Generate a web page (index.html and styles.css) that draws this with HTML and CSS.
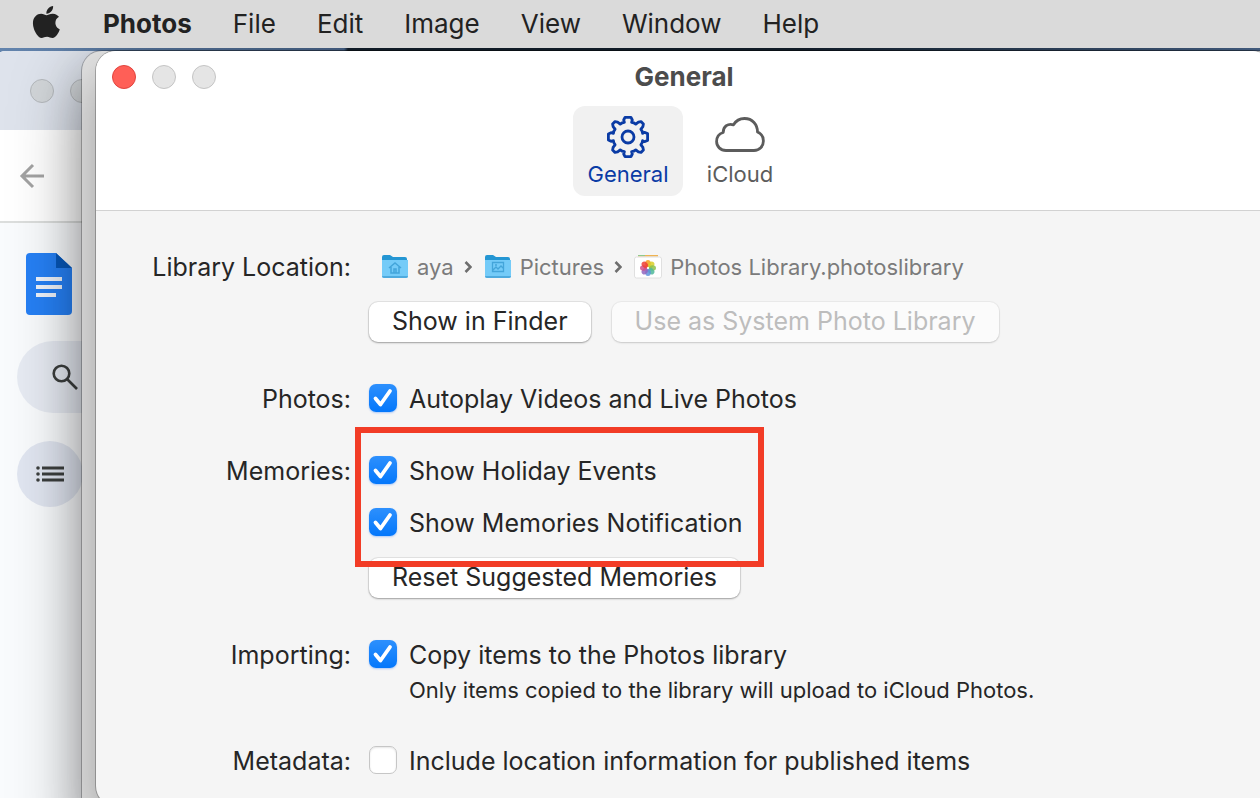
FILE: index.html
```
<!DOCTYPE html>
<html lang="en">
<head>
  <meta charset="UTF-8">
  <meta name="viewport" content="width=device-width, initial-scale=1.0">
  <title>Photos - General</title>
  <link rel="stylesheet" href="styles.css">
</head>
<body>
  <nav class="menubar">
    <a class="apple" href="#" aria-label="Apple menu">
      <svg width="28" height="32" viewBox="4 32 366 448" fill="#222"><path d="M318.700 268.700c-.2-36.700 16.400-64.400 50-84.800-18.800-26.900-47.200-41.700-84.700-44.600-35.500-2.800-74.300 20.700-88.500 20.700-15 0-49.400-19.700-76.400-19.700C63.300 141.200 4 184.800 4 273.500q0 39.300 14.400 81.200c12.800 36.700 59 126.700 107.200 125.200 25.200-.6 43-17.900 75.800-17.900 31.800 0 48.300 17.900 76.400 17.900 48.600-.7 90.400-82.500 102.600-119.300-65.200-30.700-61.700-90-61.700-91.900zm-56.600-164.200c27.300-32.400 24.800-61.900 24-72.500-24.100 1.400-52 16.400-67.900 34.900-17.500 19.800-27.800 44.300-25.600 71.900 26.100 2 49.900-11.400 69.500-34.300z"/></svg>
    </a>
    <a class="app-name" href="#">Photos</a>
    <a href="#">File</a>
    <a href="#">Edit</a>
    <a href="#">Image</a>
    <a href="#">View</a>
    <a href="#">Window</a>
    <a href="#">Help</a>
  </nav>

  <main class="desktop">
    <!-- browser window at the back -->
    <section class="docs-window">
      <div class="docs-tabs">
        <span class="light"></span>
        <span class="light"></span>
      </div>
      <div class="docs-toolbar">
        <button class="icon-btn" aria-label="Back">
          <svg width="26" height="26" viewBox="0 0 26 26" fill="none" stroke="#a3a3a3" stroke-width="3"><path d="M25 13H4M14 2L3 13l11 11"/></svg>
        </button>
      </div>
      <div class="docs-side">
        <svg class="docs-logo" width="46" height="62" viewBox="0 0 46 62">
          <path fill="#2680f5" d="M4 0h26l16 15v43a4 4 0 0 1-4 4H4a4 4 0 0 1-4-4V4a4 4 0 0 1 4-4z"/>
          <path fill="#0757b8" d="M30 0l16 15H30z"/>
          <path fill="#eef3fb" d="M10 24h26v4H10zM10 32h26v4H10zM10 40h20v4H10z"/>
        </svg>
        <button class="docs-search" aria-label="Search">
          <svg width="26" height="26" viewBox="0 0 26 26" fill="none" stroke="#3c3f3e" stroke-width="2.600"><circle cx="9.500" cy="9.500" r="7.800"/><path d="M15 15l10 10"/></svg>
        </button>
        <button class="docs-outline" aria-label="Outline">
          <svg width="28" height="16" viewBox="0 0 28 16" fill="#3c3f3e"><circle cx="2" cy="2" r="1.800"/><circle cx="2" cy="8" r="1.800"/><circle cx="2" cy="14" r="1.800"/><path d="M6 .5h22v3H6zM6 6.500h22v3H6zM6 12.500h22v3H6z"/></svg>
        </button>
      </div>
    </section>

    <!-- photo library window -->
    <section class="library-window"></section>

    <!-- settings -->
    <section class="settings-window">
      <header class="settings-header">
        <div class="titlebar">
          <div class="lights">
            <button class="light close" aria-label="Close"></button>
            <button class="light" aria-label="Minimize" disabled></button>
            <button class="light" aria-label="Zoom" disabled></button>
          </div>
          <h1>General</h1>
        </div>
        <div class="tabs">
          <button class="tab active">
            <svg width="44" height="44" viewBox="-22 -22 44 44" fill="none" stroke="#0a3ba5" stroke-width="2.800" stroke-linejoin="round">
              <path d="M14.600-3.600Q15-4.600 16.500-4.600L19.600-3.500V3.500L16.500 4.600Q15 4.600 14.600 3.600Q14.500 6 12.900 7.800L14.900 10.400L15.400 13L13 15.400L10.400 14.900L7.800 12.900Q6 14.500 3.600 14.600L4.300 17L3 19.600H-3L-4.300 17L-3.600 14.600Q-6 14.500-7.800 12.900L-10.400 14.900L-13 15.400L-15.400 13L-14.900 10.400L-12.900 7.800Q-14.500 6-14.600 3.600L-17 4.300L-19.600 3V-3L-17-4.300L-14.600-3.600Q-14.500-6-12.900-7.800L-14.900-10.400L-15.400-13L-13-15.400L-10.400-14.900L-7.800-12.900Q-6-14.500-3.600-14.600L-4.300-17L-3-19.600H3L4.300-17L3.600-14.600Q6-14.500 7.800-12.900L10.400-14.900L13-15.400L15.400-13L14.900-10.400L12.900-7.800Q14.500-6 14.600-3.600z"/>
              <circle r="6"/>
            </svg>
            General
          </button>
          <button class="tab">
            <svg width="50" height="44" viewBox="0 0 50 44" fill="none" stroke="#5c5c5c" stroke-width="2.800" stroke-linejoin="round">
              <path d="M11 35.500C5.500 35.500 1.600 31.500 1.600 26.500C1.600 22 4.200 18.700 8.200 17.500C8.200 11.500 13 8 18.500 9.800C21 5.500 25 3.500 29.500 3.500C37.500 3.500 42.500 9.500 42.500 17C46 18.500 48.400 21.800 48.400 26C48.400 31.500 44.500 35.500 39 35.500z"/>
            </svg>
            iCloud
          </button>
        </div>
      </header>

      <form class="settings">
        <div class="group">
          <div class="label">Library Location:</div>
          <div class="fields">
            <div class="path">
              <svg width="28" height="26" viewBox="0 0 28 26"><path fill="#2496d3" d="M1 3a2 2 0 0 1 2-2h6l3 2h12a2 2 0 0 1 2 2v5H1z"/><path fill="#74cbf8" d="M1 6h26v16a2 2 0 0 1-2 2H3a2 2 0 0 1-2-2z"/><path fill="#4eaade" d="M1 22h26a2 2 0 0 1-2 2H3a2 2 0 0 1-2-2z"/><path fill="none" stroke="#43a5da" stroke-width="1.500" d="M8 14l6-5 6 5M10 13v6h8v-6M13 19v-4h2v4"/></svg>
              <span>aya</span>
              <svg class="chevron" width="8" height="14" viewBox="0 0 8 14"><path d="M1.500 2l5 5-5 5"/></svg>
              <svg width="28" height="26" viewBox="0 0 28 26"><path fill="#2496d3" d="M1 3a2 2 0 0 1 2-2h6l3 2h12a2 2 0 0 1 2 2v5H1z"/><path fill="#74cbf8" d="M1 6h26v16a2 2 0 0 1-2 2H3a2 2 0 0 1-2-2z"/><path fill="#4eaade" d="M1 22h26a2 2 0 0 1-2 2H3a2 2 0 0 1-2-2z"/><path fill="none" stroke="#43a5da" stroke-width="1.300" d="M8.500 8.500h11v9h-11zM9 16l3-3 2 2 3-3 3 3"/><circle cx="12" cy="11" r="1" fill="#43a5da"/></svg>
              <span>Pictures</span>
              <svg class="chevron" width="8" height="14" viewBox="0 0 8 14"><path d="M1.500 2l5 5-5 5"/></svg>
              <svg width="28" height="26" viewBox="0 0 28 26">
                <path fill="#efb352" d="M4 1h20v1.500H4z"/><path fill="#8fc98c" d="M4 1h7v1H4z"/>
                <rect x=".5" y="3" width="27" height="21" rx="2" fill="#fff" stroke="#e0e0e0"/>
                <g transform="translate(14 14)" fill-opacity=".85">
                  <ellipse cy="-4.500" rx="2.800" ry="3.500" fill="#f79b1d"/>
                  <ellipse cy="-4.500" rx="2.800" ry="3.500" fill="#d9cf28" transform="rotate(45)"/>
                  <ellipse cy="-4.500" rx="2.800" ry="3.500" fill="#8cc14c" transform="rotate(90)"/>
                  <ellipse cy="-4.500" rx="2.800" ry="3.500" fill="#4fb99a" transform="rotate(135)"/>
                  <ellipse cy="-4.500" rx="2.800" ry="3.500" fill="#5f93dc" transform="rotate(180)"/>
                  <ellipse cy="-4.500" rx="2.800" ry="3.500" fill="#9166c0" transform="rotate(225)"/>
                  <ellipse cy="-4.500" rx="2.800" ry="3.500" fill="#d0508c" transform="rotate(270)"/>
                  <ellipse cy="-4.500" rx="2.800" ry="3.500" fill="#ee4035" transform="rotate(315)"/>
                </g>
              </svg>
              <span>Photos Library.photoslibrary</span>
            </div>
            <div class="buttons">
              <button type="button" class="btn">Show in Finder</button>
              <button type="button" class="btn" disabled>Use as System Photo Library</button>
            </div>
          </div>
        </div>

        <div class="group">
          <div class="label">Photos:</div>
          <div class="fields">
            <label class="check"><input type="checkbox" checked>Autoplay Videos and Live Photos</label>
          </div>
        </div>

        <div class="group">
          <div class="label">Memories:</div>
          <div class="fields memories">
            <label class="check"><input type="checkbox" checked>Show Holiday Events</label>
            <label class="check"><input type="checkbox" checked>Show Memories Notification</label>
            <button type="button" class="btn">Reset Suggested Memories</button>
            <div class="highlight"></div>
          </div>
        </div>

        <div class="group">
          <div class="label">Importing:</div>
          <div class="fields importing">
            <label class="check"><input type="checkbox" checked>Copy items to the Photos library</label>
            <p class="note">Only items copied to the library will upload to iCloud Photos.</p>
          </div>
        </div>

        <div class="group">
          <div class="label">Metadata:</div>
          <div class="fields">
            <label class="check"><input type="checkbox">Include location information for published items</label>
          </div>
        </div>
      </form>
    </section>
  </main>
</body>
</html>
```

FILE: styles.css
```
* {
  box-sizing: border-box;
}
body {
  margin: 0;
  height: 100vh;
  display: flex;
  flex-direction: column;
  overflow: hidden;
  font-family: Inter, "Liberation Sans", sans-serif;
  font-size: 25px;
  line-height: 32px;
  color: #262626;
}
button {
  font: inherit;
  color: inherit;
  border: none;
  padding: 0;
  background: none;
}
svg {
  display: block;
  flex: none;
}

/* menu bar */
.menubar {
  position: relative;
  z-index: 1;
  height: 48px;
  flex: none;
  display: flex;
  align-items: center;
  gap: 41px;
  padding: 0 32px;
  background: #dadada;
  font-size: 26px;
}
.menubar a {
  color: #222;
  text-decoration: none;
}
.menubar .app-name {
  font-weight: bold;
}
.menubar .apple {
  margin: -4px 2px 0 0;
}

/* desktop */
.desktop {
  position: relative;
  flex: 1;
  overflow: hidden;
  background: linear-gradient(to right, #6384ad, #4a668c 344px, #14212e 348px, #14212e 800px, #4a668c);
}
.light {
  width: 24px;
  height: 24px;
  border-radius: 50%;
  background: #e5e5e5;
  border: 1px solid #c4c4c4;
}
.light.close {
  background: #ff5f57;
  border-color: #e0443e;
}

/* docs window */
.docs-window {
  position: absolute;
  top: 3px;
  left: -8px;
  right: 0;
  bottom: 0;
  padding-left: 8px;
  border-radius: 14px 0 0 0;
  background: #f9fbfd;
  overflow: hidden;
}
.docs-tabs {
  height: 79px;
  margin-left: -8px;
  padding: 0 38px;
  display: flex;
  align-items: center;
  gap: 16px;
  background: #dee3ec;
}
.docs-tabs .light {
  background: #d2d6d9;
  border-color: #b4b8bc;
}
.docs-toolbar {
  height: 93px;
  padding-left: 19px;
  display: flex;
  align-items: center;
  background: #fff;
  border-bottom: 2px solid #dcdedd;
}
.docs-side {
  display: flex;
  flex-direction: column;
  align-items: flex-start;
  padding: 30px 17px;
}
.docs-logo {
  margin: 0 9px 26px;
}
.docs-search {
  width: 300px;
  height: 72px;
  padding-left: 35px;
  border-radius: 36px;
  background: #e7ebf3;
  margin-bottom: 28px;
}
.docs-outline {
  width: 66px;
  height: 66px;
  padding-left: 19px;
  border-radius: 50%;
  background: #e1e6f1;
}

/* windows in front */
.library-window,
.settings-window {
  position: absolute;
  top: 3px;
  border-radius: 20px;
}
.library-window {
  left: 82px;
  right: -40px;
  bottom: -40px;
  background: #e2e2e2;
  box-shadow: 0 0 0 1px rgba(0, 0, 0, 0.25), 0 24px 70px rgba(0, 0, 0, 0.4);
}
.settings-window {
  left: 96px;
  right: -12px;
  bottom: -8px;
  background: #f5f5f5;
  box-shadow: 0 0 0 1px rgba(0, 0, 0, 0.25), 0 24px 50px rgba(0, 0, 0, 0.3);
  overflow: hidden;
}
.settings-header {
  padding-bottom: 14px;
  background: #fff;
  border-bottom: 1px solid #d2d2d2;
}
.titlebar {
  height: 55px;
  padding: 0 16px 3px;
  display: grid;
  grid-template-columns: 1fr auto 1fr;
  align-items: center;
}
.titlebar h1 {
  margin: 0;
  font-size: 26px;
  font-weight: bold;
  color: #4c4c4c;
}
.lights {
  display: flex;
  gap: 16px;
}
.tabs {
  display: flex;
  justify-content: center;
  gap: 2px;
}
.tab {
  width: 110px;
  height: 90px;
  padding-top: 2px;
  display: flex;
  flex-direction: column;
  align-items: center;
  justify-content: center;
  border-radius: 12px;
  font-size: 22px;
  line-height: 30px;
  color: #5c5c5c;
}
.tab.active {
  background: #f1f1f1;
  color: #0a3ba5;
}

/* form */
.settings {
  display: flex;
  flex-direction: column;
  gap: 40px;
  padding-top: 40px;
}
.group {
  display: grid;
  grid-template-columns: 255px 1fr;
  gap: 18px;
}
.label {
  text-align: right;
}
.fields {
  display: flex;
  flex-direction: column;
  align-items: flex-start;
  gap: 20px;
}
.path {
  display: flex;
  align-items: center;
  gap: 8px;
  padding-left: 12px;
  font-size: 22px;
  color: #7b7b7b;
}
.chevron {
  margin: 0 4px 0 2px;
  fill: none;
  stroke: #6e6e6e;
  stroke-width: 2.6;
}
.buttons {
  display: flex;
  gap: 21px;
}
.btn {
  height: 40px;
  margin: -1px 0 1px;
  padding: 0 23px 2px;
  border-radius: 9px;
  background: #fff;
  box-shadow: 0 0 0 1px rgba(0, 0, 0, 0.07), 0 1px 2px rgba(0, 0, 0, 0.3);
}
.btn:disabled {
  color: #bdbdbd;
  background: #fbfbfb;
  box-shadow: 0 0 0 1px rgba(0, 0, 0, 0.04), 0 1px 2px rgba(0, 0, 0, 0.15);
}
.check {
  display: flex;
  align-items: center;
  gap: 12px;
}
.check input {
  appearance: none;
  width: 28px;
  height: 28px;
  margin: 0 0 2px;
  border: 1px solid #c6c6c6;
  border-radius: 7px;
  background: #fff;
  box-shadow: inset 0 1px 2px rgba(0, 0, 0, 0.1);
}
.check input:checked {
  border: none;
  background: url("data:image/svg+xml,%3Csvg xmlns='http://www.w3.org/2000/svg' viewBox='0 0 28 28'%3E%3Cpath d='M6.500 14.500l5 6L21 7' fill='none' stroke='white' stroke-width='3.800' stroke-linecap='round' stroke-linejoin='round'/%3E%3C/svg%3E"), linear-gradient(#2d90fd, #0377fb);
  box-shadow: 0 1px 2px rgba(0, 100, 255, 0.3);
}
.memories {
  position: relative;
}
.highlight {
  position: absolute;
  top: -28px;
  left: -14px;
  width: 409px;
  height: 140px;
  border: 6px solid #f23c26;
}
.importing {
  gap: 4px;
}
.note {
  margin: 0 0 0 40px;
  font-size: 22px;
  line-height: 30px;
}
```
